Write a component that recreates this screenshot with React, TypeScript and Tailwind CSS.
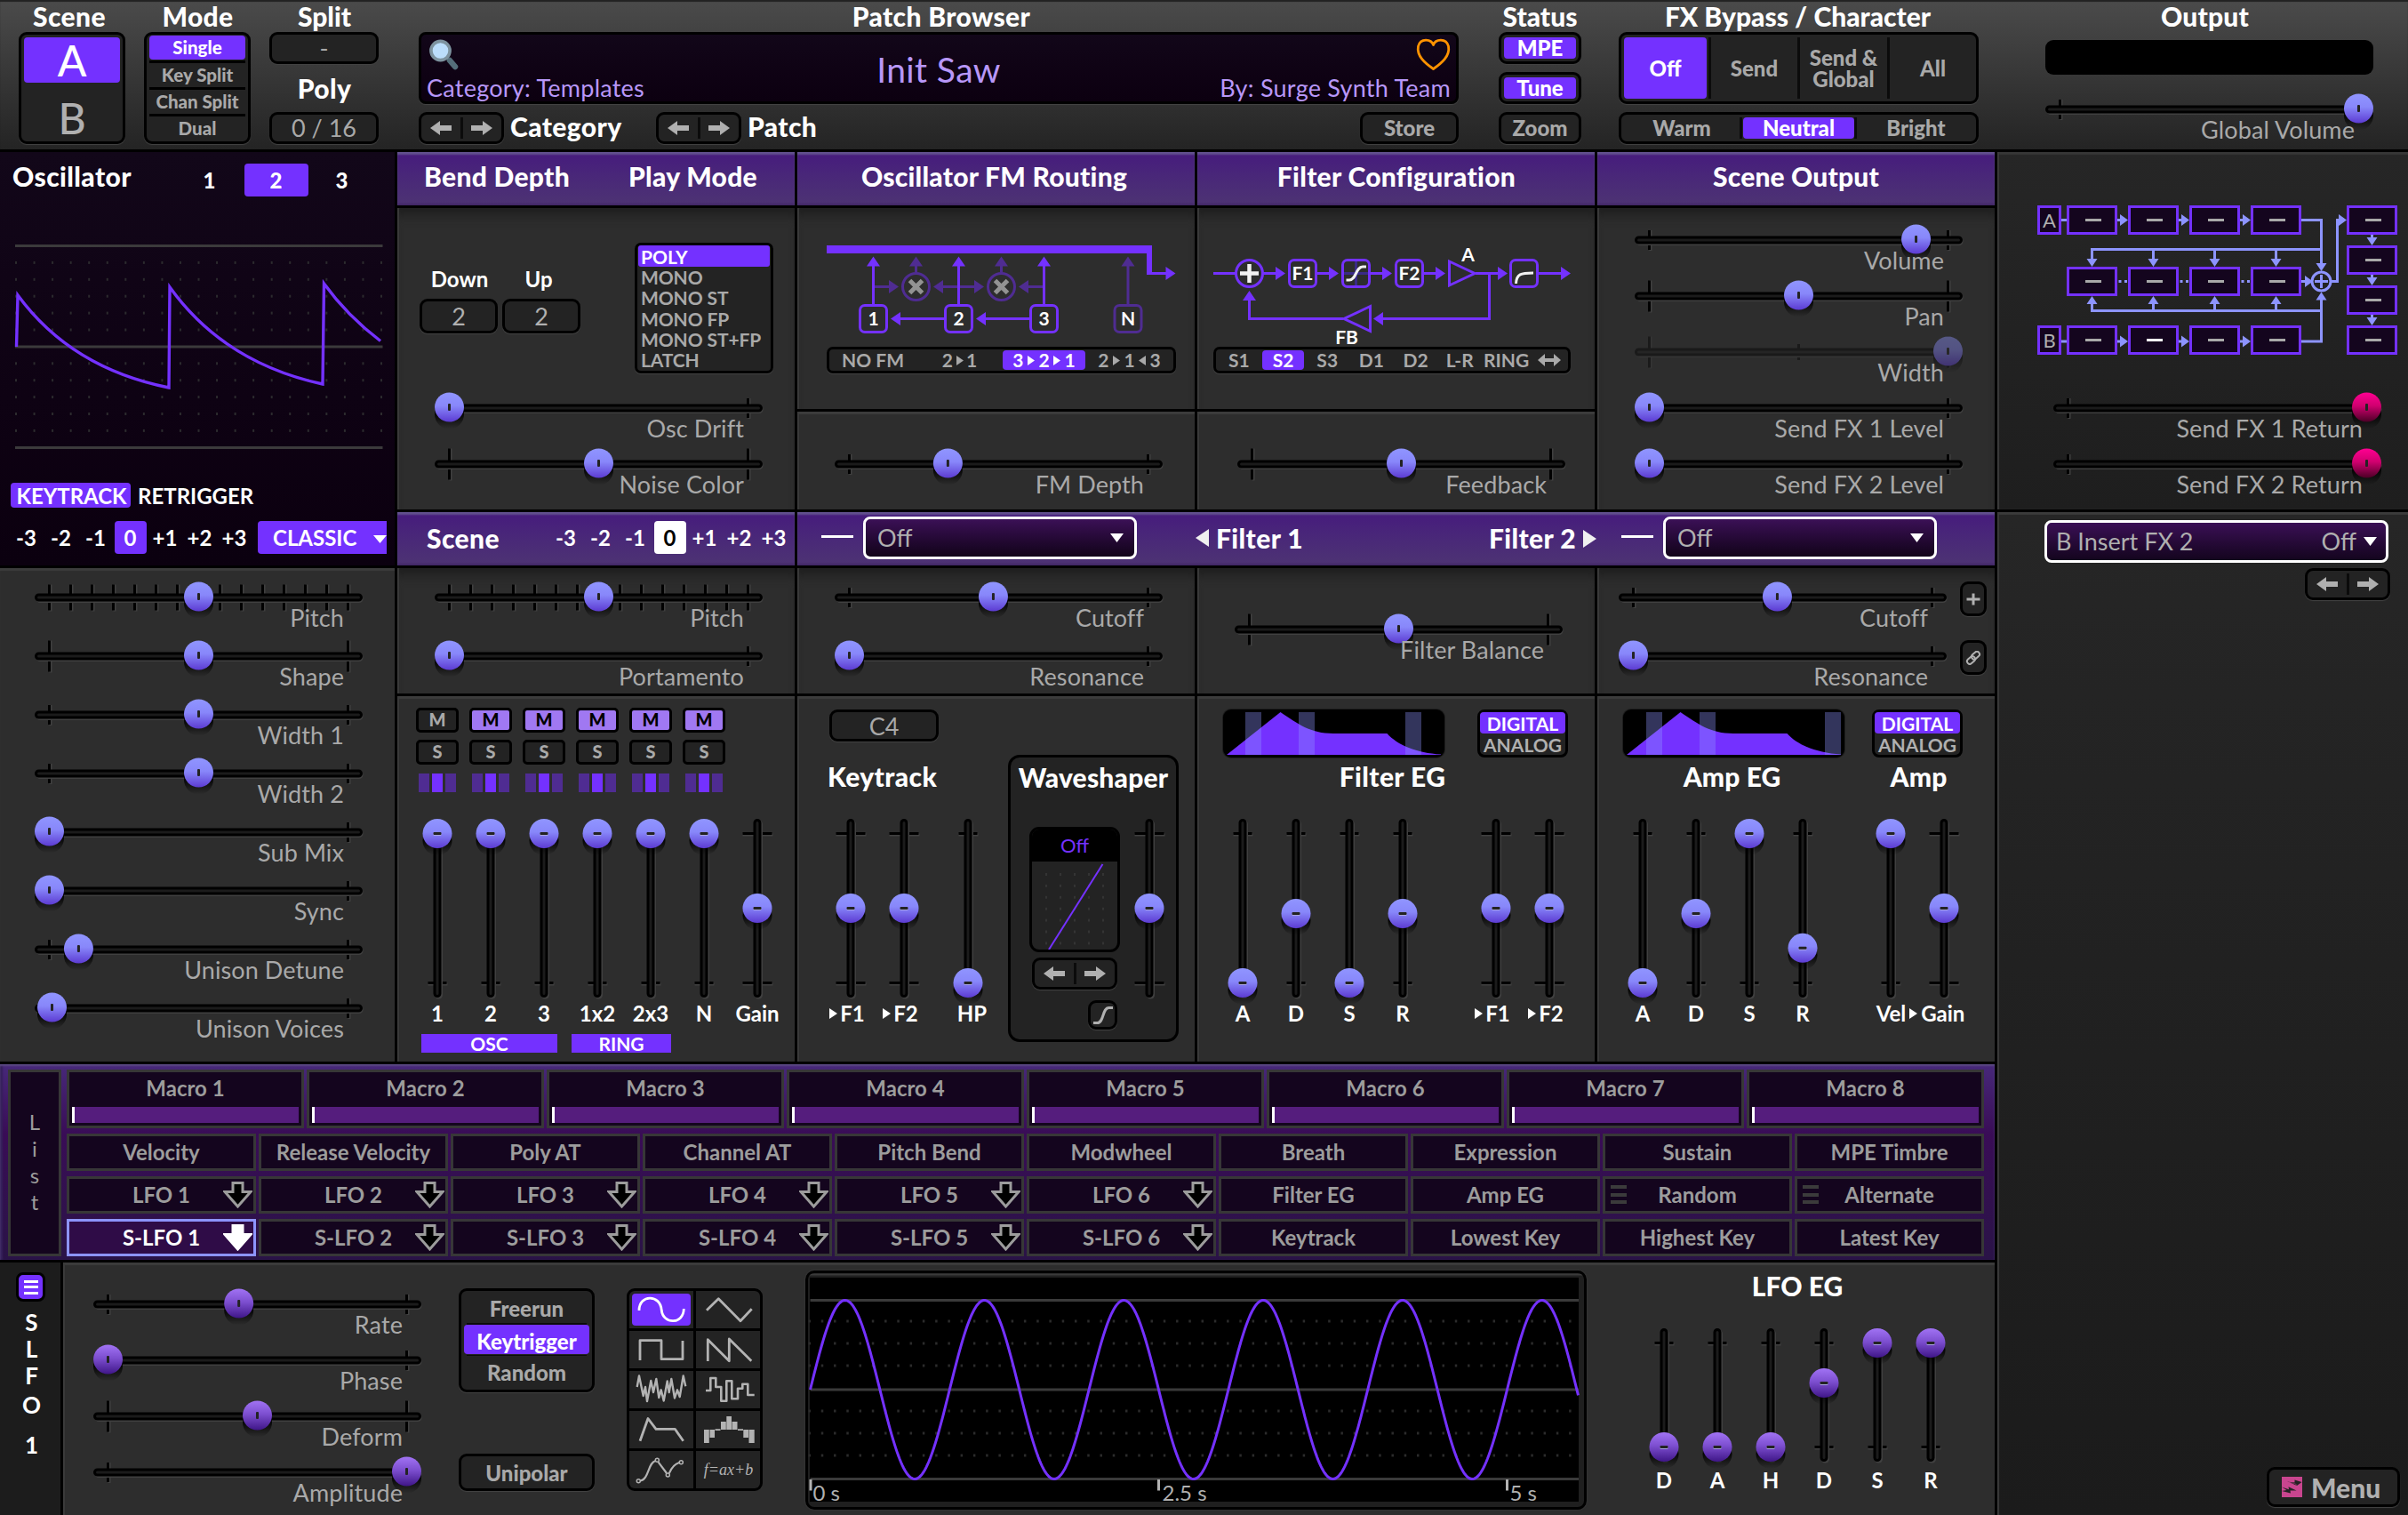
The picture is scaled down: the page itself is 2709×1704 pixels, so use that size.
import React from 'react';

/* ---------- shared drawing helpers ---------- */

type Tone = 'blue' | 'violet' | 'pink';
const KNOB: Record<Tone, string> = { blue: 'url(#kBlue)', violet: 'url(#kViolet)', pink: 'url(#kPink)' };

function Defs() {
  const stops = (id: string, a: string, b: string, c: string) => (
    <linearGradient id={id} x1="0" y1="0" x2="0" y2="1">
      <stop offset="0" stopColor={a} />
      <stop offset="0.45" stopColor={b} />
      <stop offset="1" stopColor={c} />
    </linearGradient>
  );
  return (
    <svg className="absolute h-0 w-0">
      <defs>
        {stops('kBlue', '#9095ff', '#8887fa', '#5c3bd2')}
        {stops('kViolet', '#a173f4', '#7d4fd0', '#3f1688')}
        {stops('kPink', '#ff0092', '#d0006f', '#4c0026')}
        <linearGradient id="kShadow" x1="0" y1="0" x2="0" y2="1">
          <stop offset="0.45" stopColor="#000" stopOpacity="0.95" />
          <stop offset="1" stopColor="#000" stopOpacity="0" />
        </linearGradient>
      </defs>
    </svg>
  );
}

function Knob({ cx, cy, tone, vertical }: { cx: number; cy: number; tone: Tone; vertical?: boolean }) {
  return (
    <g>
      <circle cx={cx} cy={cy + 8} r={16.5} fill="url(#kShadow)" />
      <circle cx={cx} cy={cy} r={16.5} fill={KNOB[tone]} />
      {vertical ? (
        <>
          <rect x={cx - 4.5} y={cy - 0.5} width={9} height={3} rx={1} fill="#a9a5e0" />
          <rect x={cx - 4.5} y={cy - 1.5} width={9} height={3} rx={1} fill="#232323" />
        </>
      ) : (
        <rect x={cx - 1.5} y={cy - 4} width={3} height={8} rx={1} fill="#232323" />
      )}
    </g>
  );
}

interface HProps {
  label: string;
  v: number;
  ticks?: 'short' | 'long' | 'steps' | 'width';
  tone?: Tone;
  dim?: boolean;
}

function HSlider({ label, v, ticks = 'short', tone = 'blue', dim }: HProps) {
  const xs = ticks === 'steps' ? Array.from({ length: 15 }, (_, i) => 16.5 + i * 24) : [16.5, 352.5];
  const h = ticks === 'short' ? 22 : ticks === 'steps' ? 29 : 35;
  return (
    <div className="flex w-[369px] flex-col">
      <svg width="369" height="37" viewBox="0 0 369 37" className="overflow-visible" opacity={dim ? 0.42 : 1}>
        {xs.map((x) => (
          <g key={x}>
            <rect x={x} y={19 - h / 2} width={3} height={h + 1} fill="#404040" />
            <rect x={x - 1.5} y={19 - h / 2} width={3} height={h} fill="#000" />
          </g>
        ))}
        {ticks === 'width' && <rect x={183} y={10} width={3} height={18} fill="#000" />}
        <rect x={1.5} y={16} width={368} height={9} rx={4.5} fill="#404040" />
        <rect x={1.5} y={16} width={366} height={6} rx={3} fill="#1b1b1b" stroke="#000" strokeWidth={3} />
        <Knob cx={16.5 + v * 336} cy={18} tone={tone} />
      </svg>
      <div className="relative -mt-[9px] -mb-px mr-[21px] text-right text-[27px] leading-[27px] tracking-[0.1px] text-[#a9a9a9]">{label}</div>
    </div>
  );
}

function VSlider({ v, long, tone = 'blue', len = 201 }: { v: number; long?: boolean; tone?: Tone; len?: number }) {
  const w = long ? 33 : 21;
  return (
    <svg width="60" height={len} viewBox={`0 0 60 ${len}`} className="overflow-visible">
      {[16.5, len - 16.5].map((y) => (
        <g key={y}>
          <rect x={30 - w / 2} y={y} width={w + 1} height={3} fill="#404040" />
          <rect x={30 - w / 2} y={y - 1.5} width={w} height={3} fill="#000" />
        </g>
      ))}
      <rect x={27} y={1.5} width={9} height={len} rx={4.5} fill="#404040" />
      <rect x={27} y={1.5} width={6} height={len - 3} rx={3} fill="#1b1b1b" stroke="#000" strokeWidth={3} />
      <Knob cx={30} cy={len - 16.5 - v * (len - 33)} tone={tone} vertical />
    </svg>
  );
}

function Channel({ label, v, long, tone, len, cls = '' }: { label: React.ReactNode; v: number; long?: boolean; tone?: Tone; len?: number; cls?: string }) {
  return (
    <div className={`flex w-[60px] flex-col items-center ${cls}`}>
      <VSlider v={v} long={long} tone={tone} len={len} />
      <div className={`flex h-[30px] items-center justify-center text-[24px] leading-[30px] font-bold whitespace-nowrap text-white ${len ? 'mt-[6px]' : 'mt-[3px] -mb-px'}`}>{label}</div>
    </div>
  );
}

const Tri = ({ w = 9, h = 11, left, cls = '' }: { w?: number; h?: number; left?: boolean; cls?: string }) => (
  <svg width={w} height={h} viewBox="0 0 10 10" preserveAspectRatio="none" className={cls} fill="currentColor">
    <path d={left ? 'M10 0V10L0 5Z' : 'M0 0V10L10 5Z'} />
  </svg>
);

const Down = ({ w = 15, h = 9 }: { w?: number; h?: number }) => (
  <svg width={w} height={h} viewBox="0 0 10 10" preserveAspectRatio="none" fill="#fff">
    <path d="M0 0H10L5 10Z" />
  </svg>
);

const Title = ({ children, cls = '' }: { children: React.ReactNode; cls?: string }) => (
  <div className={`text-[30px] font-black whitespace-nowrap text-white ${cls}`}>{children}</div>
);

const box = 'box-border rounded-[9px] border-[3px] border-black bg-[#232323] shadow-[0_1px_1px_#444]';
const band = 'bg-linear-to-b from-[#461a7d] to-[#4d3373] shadow-[inset_0_3px_2px_#62518e,inset_0_-2px_2px_#432868]';
const bodyTop = 'shadow-[inset_2px_0_1px_#3b3b3b,inset_0_14px_12px_-6px_#1f1f1f] bg-[#2d2d2d]';
const bodyLit = 'shadow-[inset_2px_0_1px_#3b3b3b,inset_0_3px_1px_#3c3c3c] bg-[#2d2d2d]';

function ArrowBox({ cls = '' }: { cls?: string }) {
  return (
    <div className={`${box} flex h-[36px] w-[96px] items-center text-[#b0b0b0] ${cls}`}>
      <svg className="mx-auto" width="24" height="16" viewBox="0 0 24 16" fill="currentColor"><path d="M0 8L11 0V5H24V11H11V16Z" /></svg>
      <div className="h-[24px] w-[3px] bg-[#0b0b0b]" />
      <svg className="mx-auto" width="24" height="16" viewBox="0 0 24 16" fill="currentColor"><path d="M24 8L13 0V5H0V11H13V16Z" /></svg>
    </div>
  );
}

/* ---------- header ---------- */

function Header() {
  return (
    <header className="flex h-[168px] items-start bg-linear-to-b from-[#4b4b4b] to-[#242424] shadow-[inset_0_2px_1px_#222]">
      <div className="ml-[21px] flex w-[120px] flex-col">
        <Title cls="h-[36px] pr-[6px] text-center leading-[36px] tracking-[0.4px]">Scene</Title>
        <div className={`${box} flex h-[126px] flex-col p-[3px] text-[48px] font-medium`}>
          <div className="flex h-[51px] items-center justify-center rounded-[4px] bg-[#7431ff] pt-px text-white">A</div>
          <div className="mt-[4px] h-[3px] bg-black" />
          <div className="flex flex-1 items-center justify-center pb-[4px] text-[#b0b0b0]">B</div>
        </div>
      </div>
      <div className="ml-[21px] flex w-[120px] flex-col">
        <Title cls="h-[36px] pl-px text-center leading-[36px] tracking-[0.3px]">Mode</Title>
        <div className={`${box} flex h-[126px] flex-col px-[3px] text-center text-[20.5px] leading-[26px] font-black text-[#a9a9a9]`}>
          <div className="mt-[1px] h-[27px] rounded-[4px] bg-[#7431ff] leading-[27px] text-white">Single</div>
          <div className="mt-px h-[3px] bg-black" />
          <div className="h-[27px]">Key Split</div>
          <div className="h-[3px] bg-black" />
          <div className="h-[27px]">Chan Split</div>
          <div className="h-[3px] bg-black" />
          <div className="h-[27px]">Dual</div>
        </div>
      </div>
      <div className="ml-[21px] flex w-[123px] flex-col">
        <Title cls="h-[36px] pl-px text-center leading-[36px]">Split</Title>
        <div className={`${box} flex h-[36px] items-center justify-center text-[27px] text-[#a9a9a9]`}>-</div>
        <Title cls="h-[54px] pl-px text-center leading-[54px] tracking-[0.4px]">Poly</Title>
        <div className={`${box} flex h-[36px] items-center justify-center text-[27px] text-[#a9a9a9]`}>0 / 16</div>
      </div>
      <div className="ml-[45px] flex w-[1170px] flex-col">
        <Title cls="h-[36px] pl-[6px] text-center leading-[36px] tracking-[0.35px]">Patch Browser</Title>
        <div className="grid h-[81px] grid-cols-[1fr_auto_1fr] rounded-[8px] border-[3px] border-black bg-linear-to-b from-[#120719] to-[#0c0010] text-[27px] leading-[27px] tracking-[0.25px] text-[#b897f8] shadow-[0_1px_1px_#444]">
          <div className="flex flex-col justify-between pt-[4px] pb-[2px] pl-[6px]">
            <svg width="36" height="36" viewBox="0 0 36 36" className="ml-px">
              <path d="M22 22L25.5 25.5" stroke="#90a4ae" strokeWidth="3.5" />
              <path d="M25 25L31 32" stroke="#546e7a" strokeWidth="6.5" strokeLinecap="round" />
              <circle cx="14.5" cy="14" r="10.6" fill="#bbdefb" stroke="#7d939f" strokeWidth="3.6" />
            </svg>
            <div>Category: Templates</div>
          </div>
          <div className="flex items-center pt-[3px] text-[39px] tracking-[0.4px]">Init Saw</div>
          <div className="flex flex-col items-end justify-between pt-[3px] pr-[6px] pb-[2px]">
            <svg width="42" height="38" viewBox="0 0 42 38" className="-mr-px" fill="none" stroke="#ff9300" strokeWidth="2.8" strokeLinejoin="round">
              <path d="M21.5 8.5C19 1.5 7 0.5 4.5 10C2.5 21 12 29 21.5 35.5C31 29 40.500 21 38.500 10C36 0.5 24 1.500 21.500 8.500Z" />
            </svg>
            <div>By: Surge Synth Team</div>
          </div>
        </div>
        <div className="mt-[9px] flex h-[36px] items-center">
          <ArrowBox />
          <Title cls="ml-[7px] w-[164px] pb-[4px] leading-[32px] tracking-[0.4px]">Category</Title>
          <ArrowBox />
          <Title cls="ml-[7px] pb-[4px] leading-[32px] tracking-[0.4px]">Patch</Title>
          <div className={`${box} ml-auto flex h-[36px] w-[111px] items-center justify-center text-[24px] font-black text-[#a9a9a9]`}>Store</div>
        </div>
      </div>
      <div className="ml-[45px] flex w-[93px] flex-col gap-[9px] text-center text-[24px] leading-[24px] font-black">
        <Title cls="-mb-[9px] h-[36px] self-center leading-[36px]">Status</Title>
        <div className={`${box} h-[36px] p-[3px] text-white`}><div className="h-[24px] rounded-[4px] bg-[#7431ff]">MPE</div></div>
        <div className={`${box} h-[36px] p-[3px] text-white`}><div className="h-[24px] rounded-[4px] bg-[#7431ff]">Tune</div></div>
        <div className={`${box} h-[36px] pt-[3px] text-[#a9a9a9]`}>Zoom</div>
      </div>
      <div className="ml-[42px] flex w-[405px] flex-col text-center text-[24px] leading-[24px] font-black text-[#a9a9a9]">
        <Title cls="h-[36px] self-center pr-[2px] leading-[36px]">FX Bypass / Character</Title>
        <div className={`${box} flex h-[81px] items-center p-[3px]`}>
          <div className="flex h-[69px] w-[93px] items-center justify-center rounded-[4px] bg-[#7431ff] text-white">Off</div>
          <div className="ml-[2px] h-[69px] w-[3px] bg-[#0b0b0b]" />
          <div className="w-[97px]">Send</div>
          <div className="h-[69px] w-[3px] bg-[#0b0b0b]" />
          <div className="w-[98px]">Send &amp;<br />Global</div>
          <div className="h-[69px] w-[3px] bg-[#0b0b0b]" />
          <div className="flex-1 pl-[3px]">All</div>
        </div>
        <div className={`${box} mt-[9px] flex h-[36px] items-center p-[3px]`}>
          <div className="w-[130px]">Warm</div>
          <div className="h-[24px] w-[3px] bg-[#0b0b0b]" />
          <div className="ml-px h-[24px] w-[125px] rounded-[4px] bg-[#7431ff] text-white">Neutral</div>
          <div className="h-[24px] w-[3px] bg-[#0b0b0b]" />
          <div className="flex-1 pl-[2px]">Bright</div>
        </div>
      </div>
      <div className="ml-[75px] flex w-[369px] flex-col">
        <Title cls="h-[36px] pr-[10px] text-center leading-[36px] tracking-[0.2px]">Output</Title>
        <div className="mt-[9px] h-[39px] rounded-[9px] bg-black" />
        <div className="mt-[20px]"><HSlider label="Global Volume" v={1} /></div>
      </div>
    </header>
  );
}

/* ---------- oscillator column ---------- */

const octs = ['-3', '-2', '-1', '0', '+1', '+2', '+3'];

function Octaves({ active }: { active: string }) {
  return (
    <div className="flex text-center text-[24px] leading-[37px] font-bold text-white">
      {octs.map((o) => (
        <div key={o} className="w-[39px] px-[1.5px]">
          <div className={`h-[37px] rounded-[4px] ${o === '0' ? active : ''}`}>{o}</div>
        </div>
      ))}
    </div>
  );
}

function OscColumn() {
  const xs = Array.from({ length: 21 }, (_, i) => 18 + i * 20.55);
  const ys = [1, 2, 3, 4, 5, 7, 8, 9, 10, 11].map((i) => 276.5 + i * 18.9);
  return (
    <section className="flex w-[444px] flex-col">
      <div className="flex h-[465px] flex-col bg-linear-to-b from-[#120719] to-[#0b000f]">
        <div className="flex h-[59px] items-start">
          <Title cls="mt-[9px] ml-[14px] w-[184px] leading-[36px] tracking-[0.4px]">Oscillator</Title>
          <div className="mt-[13px] flex text-center text-[24px] leading-[37px] font-black text-white">
            <div className="w-[75px]">1</div>
            <div className="w-[75px] px-[1.5px]"><div className="rounded-[4px] bg-[#7431ff]">2</div></div>
            <div className="w-[73px]">3</div>
          </div>
        </div>
        <svg width="444" height="300" viewBox="0 230 444 300" fill="none">
          {[276.500, 390, 503.500].map((y) => <path key={y} d={`M17 ${y}H430.500`} stroke="#3b3a3b" strokeWidth="3" />)}
          {ys.map((y) => xs.map((x) => <rect key={x + '-' + y} x={x - 1} y={y - 1.500} width="2" height="3" fill="#2c2b2e" />))}
          <path d="M18.500 390L20 332Q80 414 190 436L191 323Q252 408 363 432L364.500 319Q390.500 355 428 383.500" stroke="#7431ff" strokeWidth="3.4" />
        </svg>
        <div className="mt-[13px] ml-[12px] flex items-center text-[24px] leading-[27px] font-bold text-white">
          <div className="w-[135px] rounded-[4px] bg-[#7431ff] pt-px pl-[2px] text-center leading-[27px]">KEYTRACK</div>
          <div className="ml-[8px] pt-px">RETRIGGER</div>
        </div>
        <div className="mt-[15px] flex items-center pl-[10px]">
          <Octaves active="bg-[#7431ff]" />
          <div className="ml-[7px] flex h-[37px] w-[145px] items-center overflow-hidden rounded-l-[4px] bg-[#7431ff] pl-[17px] text-[24px] font-bold text-white">
            <span className="w-[113px] shrink-0">CLASSIC</span>
            <span className="shrink-0 pt-[3px]"><Down w={15} h={9} /></span>
          </div>
        </div>
      </div>
      <div className="mt-[3px] flex flex-1 flex-col gap-[12px] bg-[#2d2d2d] pt-[14px] pl-[39px] shadow-[inset_0_3px_1px_#3c3c3c]">
        <HSlider label="Pitch" v={0.5} ticks="steps" />
        <HSlider label="Shape" v={0.5} ticks="long" />
        <HSlider label="Width 1" v={0.5} />
        <HSlider label="Width 2" v={0.5} />
        <HSlider label="Sub Mix" v={0} />
        <HSlider label="Sync" v={0} />
        <HSlider label="Unison Detune" v={0.098} />
        <HSlider label="Unison Voices" v={0.009} />
      </div>
    </section>
  );
}

/* ---------- upper row panels ---------- */

function BendPanel() {
  return (
    <section className="flex w-[447px] flex-col">
      <div className={`${band} flex h-[60px]`}>
        <Title cls="ml-[30px] w-[230px] leading-[55px] tracking-[0.3px]">Bend Depth</Title>
        <Title cls="leading-[55px] tracking-[0.3px]">Play Mode</Title>
      </div>
      <div className={`${bodyTop} mt-[3px] flex flex-1 flex-col`}>
        <div className="flex h-[206px] items-start">
          <div className="mt-[64px] ml-[25px] grid grid-cols-[88px_88px] gap-x-[5px] text-center">
            <div className="pl-[2px] text-[24px] leading-[31px] font-bold text-white">Down</div>
            <div className="pr-[6px] text-[24px] leading-[31px] font-bold text-white">Up</div>
            <div className={`${box} mt-[7px] h-[39px] text-[27px] leading-[34px] text-[#b0b0b0]`}>2</div>
            <div className={`${box} mt-[7px] h-[39px] text-[27px] leading-[34px] text-[#b0b0b0]`}>2</div>
          </div>
          <div className={`${box} mt-[39px] ml-[61px] flex h-[147px] w-[156px] flex-col rounded-[7px]! px-px text-[21px] leading-[23.300px] font-bold text-[#a9a9a9]`}>
            <div className="h-[24px] rounded-[3px] bg-[#7431ff] pl-[3px] leading-[26px] text-white">POLY</div>
            {['MONO', 'MONO ST', 'MONO FP', 'MONO ST+FP', 'LATCH'].map((t) => <div key={t} className="pl-[3px] tracking-[-0.1px]">{t}</div>)}
          </div>
        </div>
        <div className="flex flex-col gap-[9px] pl-[42px]">
          <HSlider label="Osc Drift" v={0} />
          <HSlider label="Noise Color" v={0.5} ticks="long" />
        </div>
      </div>
    </section>
  );
}

const P = '#7431ff';
const D = '#4f2c92';
const up = (x: number, y: number) => `M${x - 7.5} ${y + 11}L${x} ${y}L${x + 7.5} ${y + 11}Z`;
const rt = (x: number, y: number) => `M${x - 11} ${y - 7.5}L${x} ${y}L${x - 11} ${y + 7.5}Z`;
const lf = (x: number, y: number) => `M${x + 11} ${y - 7.5}L${x} ${y}L${x + 11} ${y + 7.5}Z`;

function Node({ x, y, c = P, t }: { x: number; y: number; c?: string; t?: string }) {
  return (
    <g>
      <rect x={x - 15} y={y - 15} width={30} height={30} rx={5.5} fill="none" stroke={c} strokeWidth={3} />
      {t && <text x={x} y={y + 7.500} textAnchor="middle" fontSize={21} fontWeight={700} fill="#fff">{t}</text>}
    </g>
  );
}

function FMPanel() {
  const item = 'flex h-[22px] items-center justify-center';
  return (
    <section className="flex w-[447px] flex-col">
      <div className={`${band} h-[60px]`}><Title cls="pr-[4px] text-center leading-[55px] tracking-[0.25px]">Oscillator FM Routing</Title></div>
      <div className={`${bodyTop} mt-[3px] flex h-[226px] flex-col pt-[33px]`}>
        <svg className="ml-[30px]" width="399" height="112" viewBox="927 267 399 112" fill="none">
          <path d="M930 280.500H1296" stroke={P} strokeWidth="9" />
          <path d="M1293 280V309" stroke={P} strokeWidth="6" />
          <path d="M1292 307.500H1313" stroke={P} strokeWidth="3" />
          <path d={rt(1322.500, 307.500)} fill={P} />
          <g stroke={D} strokeWidth="3">
            <path d="M982.500 322.500H1002M1078.500 322.500H1060M1078.500 322.500H1098M1174.500 322.500H1156M1030.500 298V307M1126.500 298V307M1269 298V343" />
            <circle cx="1030.500" cy="322.500" r="15" /><circle cx="1126.500" cy="322.500" r="15" />
          </g>
          <path d={rt(1011, 322.500) + lf(1050, 322.500) + rt(1107, 322.500) + lf(1146, 322.500) + up(1030.500, 288.500) + up(1126.500, 288.500) + up(1269, 288.500)} fill={D} />
          <g stroke={P} strokeWidth="3">
            <path d="M982.500 298V343M1078.500 298V343M1174.500 298V343M1063 358.500H1012M1159 358.500H1108" />
          </g>
          <path d={up(982.500, 288.500) + up(1078.500, 288.500) + up(1174.500, 288.500) + lf(1002, 358.500) + lf(1098, 358.500)} fill={P} />
          <path d="M1023.500 315.500L1037.500 329.500M1037.500 315.500L1023.500 329.500M1119.500 315.500L1133.500 329.500M1133.500 315.500L1119.500 329.500" stroke="#939393" strokeWidth="5" />
          <Node x={982.5} y={358.5} t="1" /><Node x={1078.5} y={358.5} t="2" /><Node x={1174.500} y={358.5} t="3" /><Node x={1269} y={358.5} c={D} t="N" />
        </svg>
        <div className={`${box} mt-[11px] ml-[33px] flex h-[30px] w-[393px] items-center rounded-[7px]! text-[21px] leading-[22px] font-bold text-[#a9a9a9]`}>
          <div className={`${item} w-[98px]`}>NO FM</div>
          <div className={`${item} w-[97px] gap-[3.500px]`}>2<Tri w={8} />1</div>
          <div className={`${item} w-[93px] gap-[4.500px] rounded-[4px] bg-[#7431ff] text-white`}>3<Tri w={8} />2<Tri w={8} />1</div>
          <div className={`${item} flex-1 gap-[4.500px]`}>2<Tri w={8} />1<Tri w={8} left />3</div>
        </div>
      </div>
      <div className={`${bodyLit} mt-[3px] flex-1 pt-[40px] pl-[42px]`}><HSlider label="FM Depth" v={0.33} /></div>
    </section>
  );
}

function FilterConfigPanel() {
  return (
    <section className="flex w-[447px] flex-col">
      <div className={`${band} h-[60px]`}><Title cls="pl-px text-center leading-[55px] tracking-[0.3px]">Filter Configuration</Title></div>
      <div className={`${bodyTop} mt-[3px] flex h-[226px] flex-col pt-[33px]`}>
        <svg className="ml-[15px]" width="408" height="123" viewBox="1362 267 408 123" fill="none">
          <g stroke={P} strokeWidth="3">
            <path d="M1365 307.500H1390M1420 307.500H1436M1482 307.500H1496M1542 307.500H1556M1602 307.500H1617M1660 307.500H1686M1731 307.500H1757" />
            <path d="M1675.500 307.500V358.500H1555M1511 358.500H1405.500V337" />
            <circle cx="1405.500" cy="307.500" r="15" />
            <path d="M1630.500 294V321L1659 307.500Z" />
            <path d="M1541.500 344.500V372.500L1512 358.500Z" />
          </g>
          <path d={rt(1446, 307.500) + rt(1506, 307.500) + rt(1566, 307.500) + rt(1626, 307.500) + rt(1696, 307.500) + rt(1767, 307.500) + lf(1545, 358.500) + up(1405.500, 327)} fill={P} />
          <path d="M1525.500 293V322M1511 307.500H1540" stroke="#3a2a86" strokeWidth="3" />
          <path d="M1405.500 297V318M1395 307.500H1416" stroke="#f2f2f2" strokeWidth="4.500" />
          <path d="M1514.500 315H1518C1526 315 1525 300 1533 300H1537" stroke="#f2f2f2" strokeWidth="3" />
          <path d="M1705.500 319C1706 308 1711 307 1725 307" stroke="#f2f2f2" strokeWidth="3" />
          <Node x={1465.500} y={307.5} t="F1" /><Node x={1525.500} y={307.5} /><Node x={1585.500} y={307.5} t="F2" /><Node x={1714.500} y={307.5} />
          <text x="1651.500" y="293.500" textAnchor="middle" fontSize="21" fontWeight="700" fill="#fff">A</text>
          <text x="1515" y="386.500" textAnchor="middle" fontSize="21" fontWeight="700" fill="#fff">FB</text>
        </svg>
        <div className={`${box} ml-[18px] flex h-[30px] w-[402px] items-center rounded-[7px]! text-center text-[21px] leading-[22px] font-bold text-[#a9a9a9]`}>
          {['S1', 'S2', 'S3', 'D1', 'D2', 'L-R'].map((t) => (
            <div key={t} className={`w-[49.700px] ${t === 'S2' ? 'text-white' : ''}`}><div className={`mr-0 ml-[2px] rounded-[4px] ${t === 'S2' ? 'bg-[#7431ff]' : ''}`}>{t}</div></div>
          ))}
          <div className="ml-[2px] w-[53px]">RING</div>
          <svg className="mx-auto" width="26" height="16" viewBox="0 0 26 16" fill="currentColor"><path d="M0 8L8 1V6H18V1L26 8L18 15V10H8V15Z" /></svg>
        </div>
      </div>
      <div className={`${bodyLit} mt-[3px] flex-1 pt-[40px] pl-[45px]`}><HSlider label="Feedback" v={0.5} ticks="long" /></div>
    </section>
  );
}

function SceneOutputPanel() {
  return (
    <section className="flex w-[447px] flex-col">
      <div className={`${band} h-[60px]`}><Title cls="text-center leading-[55px] tracking-[0.15px]">Scene Output</Title></div>
      <div className={`${bodyTop} mt-[3px] flex flex-1 flex-col gap-[9px] pt-[17px] pl-[42px]`}>
        <HSlider label="Volume" v={0.893} />
        <HSlider label="Pan" v={0.5} ticks="long" />
        <HSlider label="Width" v={1} ticks="width" dim />
        <HSlider label="Send FX 1 Level" v={0} />
        <HSlider label="Send FX 2 Level" v={0} />
      </div>
    </section>
  );
}

/* ---------- lower row panels ---------- */

const chans = ['1', '2', '3', '1x2', '2x3', 'N'];

function ScenePanel() {
  return (
    <section className="flex w-[447px] flex-col">
      <div className={`${band} flex h-[60px] items-center`}>
        <Title cls="ml-[33px] w-[137px] pb-[2px] leading-[56px] tracking-[0.4px]">Scene</Title>
        <div className="-mt-[3px]"><Octaves active="bg-white text-black" /></div>
      </div>
      <div className={`${bodyTop} mt-[3px] flex h-[141px] flex-col gap-[12px] pt-[14px] pl-[42px]`}>
        <HSlider label="Pitch" v={0.5} ticks="steps" />
        <HSlider label="Portamento" v={0} />
      </div>
      <div className={`${bodyLit} mt-[3px] flex flex-1 flex-col pt-[13px] pl-[15px]`}>
        <div className="flex items-end">
          {chans.map((c, i) => (
            <div key={c} className="flex w-[60px] flex-col items-center">
              <div className={`h-[28px] w-[48px] rounded-[5px] border-[3px] border-black text-center text-[20px] leading-[21px] font-black ${i ? 'bg-[#a078f2] text-black' : 'bg-[#232323] text-[#a9a9a9]'}`}>M</div>
              <div className="mt-[8px] h-[28px] w-[48px] rounded-[5px] border-[3px] border-black bg-[#232323] text-center text-[20px] leading-[21px] font-black text-[#a9a9a9]">S</div>
              <div className="mt-[10px] mb-[30px] flex h-[21px] gap-[3px]">
                <div className="w-[12px] bg-[#4f2c92]" /><div className="w-[12px] bg-[#7431ff]" /><div className="w-[12px] bg-[#4f2c92]" />
              </div>
              <Channel label={c} v={1} />
            </div>
          ))}
          <Channel label="Gain" v={0.5} long />
        </div>
        <div className="mt-[9px] flex pl-[12px] text-center text-[21px] leading-[21px] font-bold text-white">
          <div className="w-[153px] bg-[#7431ff]">OSC</div>
          <div className="ml-[16px] w-[112px] bg-[#7431ff]">RING</div>
        </div>
      </div>
    </section>
  );
}

function OffSelect() {
  return (
    <div className="flex items-start pt-[5px]">
      <div className="mt-[21px] h-[3px] w-[36px] bg-white" />
      <div className="ml-[11px] flex h-[48px] w-[308px] items-center justify-between rounded-[8px] border-[3px] border-white bg-linear-to-b from-[#3b1056] to-[#12041a] pr-[12px] pl-[13px] text-[27px] text-[#b0b0b0]">
        <span className="pt-px">Off</span><Down w={15} h={10} />
      </div>
    </div>
  );
}

const trig = (t: string) => <span className="-ml-[8px] flex items-center gap-[3px]"><Tri w={9} h={12} />{t}</span>;

function Digital({ cls = '' }: { cls?: string }) {
  return (
    <div className={`h-[54px] w-[102px] rounded-[8px] border-[3px] border-black bg-[#232323] text-center text-[21px] leading-[25px] font-bold ${cls}`}>
      <div className="h-[24px] rounded-[4px] bg-[#7431ff] leading-[26px] text-white">DIGITAL</div>
      <div className="text-[#b0b0b0]">ANALOG</div>
    </div>
  );
}

function EnvView({ handles, cls = '' }: { handles: number[]; cls?: string }) {
  return (
    <div className={`h-[54px] w-[249px] rounded-[9px] bg-black shadow-[0_0_0_1px_#1d1d1d] ${cls}`}>
      <svg width="249" height="54" viewBox="0 0 249 54">
        <path d="M4 51L64.500 3C84 16 98 27 124 27H184.500C196 40 218 49 245 50.500V51Z" fill="#7431ff" />
        {handles.map((x) => <rect key={x} x={x} y={3} width={18} height={48} fill="#8d94ff" fillOpacity={0.36} />)}
      </svg>
    </div>
  );
}

function FilterArea() {
  return (
    <section className="flex w-[1347px] flex-col">
      <div className={`${band} grid h-[60px] grid-cols-[447px_1fr_447px] gap-[3px]`}>
        <div className="pl-[27px]"><OffSelect /></div>
        <div className="flex items-start justify-between text-[#f0f0f0]">
          <div className="-ml-[2px] flex items-center gap-[8px]"><Tri w={15} h={20} left /><Title cls="leading-[58px] tracking-[0.4px]">Filter 1</Title></div>
          <div className="-mr-[2px] flex items-center gap-[8px]"><Title cls="leading-[58px] tracking-[0.4px]">Filter 2</Title><Tri w={15} h={20} cls="mt-[2px]" /></div>
        </div>
        <div className="pl-[27px]"><OffSelect /></div>
      </div>
      <div className="mt-[3px] flex h-[141px] gap-[3px]">
        <div className={`${bodyTop} flex w-[447px] flex-col gap-[12px] pt-[14px] pl-[42px]`}>
          <HSlider label="Cutoff" v={0.482} />
          <HSlider label="Resonance" v={0} />
        </div>
        <div className={`${bodyTop} w-[447px] pt-[50px] pl-[42px]`}>
          <HSlider label="Filter Balance" v={0.5} ticks="long" />
        </div>
        <div className={`${bodyTop} flex w-[447px] pt-[14px] pl-[24px]`}>
          <div className="flex flex-col gap-[12px]">
            <HSlider label="Cutoff" v={0.482} />
            <HSlider label="Resonance" v={0} />
          </div>
          <div className="mt-px ml-[15px] flex flex-col gap-[27px]">
            <div className={`${box} flex h-[39px] w-[30px] items-center justify-center`}>
              <svg width="16" height="16" viewBox="0 0 16 16"><path d="M8 1.500V14.500M0.500 8H15.500" stroke="#b0b0b0" strokeWidth="3" /></svg>
            </div>
            <div className={`${box} flex h-[39px] w-[30px] items-center justify-center`}>
              <svg width="18" height="16" viewBox="0 0 18 16" fill="none" stroke="#b0b0b0" strokeWidth="2">
                <rect x="6.500" y="2.200" width="10" height="6" rx="3" transform="rotate(-42 11.500 5.200)" />
                <rect x="1.500" y="7.500" width="10" height="6" rx="3" transform="rotate(-42 6.500 10.500)" />
              </svg>
            </div>
          </div>
        </div>
      </div>
      <div className="mt-[3px] flex flex-1 gap-[3px]">
        <div className={`${bodyLit} flex w-[447px] items-start`}>
          <div className="flex w-[237px] flex-col pt-[15px] pl-[30px]">
            <div className={`${box} ml-[6px] h-[36px] w-[123px] text-center text-[27px] leading-[32px] text-[#a9a9a9]`}>C4</div>
            <Title cls="mt-[21px] ml-[4px] leading-[36px] tracking-[0.4px]">Keytrack</Title>
            <div className="mt-[30px] flex">
              <Channel label={trig('F1')} v={0.5} long />
              <Channel label={trig('F2')} v={0.5} long />
              <Channel label={<span className="pl-[9px]">HP</span>} v={0} cls="ml-[12px]" />
            </div>
          </div>
          <div className="mt-[66px] flex h-[323px] w-[192px] flex-col rounded-[13px] border-[3px] border-black bg-[#232323] pt-[5px]">
            <Title cls="text-center leading-[35px] tracking-[0.2px]">Waveshaper</Title>
            <div className="mt-px flex pl-[21px]">
              <div className="mt-[37px] flex w-[102px] flex-col items-center">
                <div className="h-[141px] w-[102px] overflow-hidden rounded-[11px] border-[3px] border-black bg-[#232323]">
                  <div className="h-[36px] bg-black text-center text-[22px] leading-[35px] text-[#7431ff]">Off</div>
                  <svg width="96" height="99" viewBox="1161 969 96 99">
                    {[0, 1, 2, 3, 4].map((i) => [0, 1, 2, 3, 4, 5, 6].map((j) => <rect key={`${i}-${j}`} x={1176 + i * 16} y={982 + j * 12.900} width="2" height="3" fill="#343434" />))}
                    <path d="M1180 1068L1240.500 972" stroke="#7431ff" strokeWidth="2" />
                  </svg>
                </div>
                <ArrowBox cls="mt-[6px]" />
                <div className={`${box} mt-[12px] mr-[3px] flex h-[33px] w-[33px] items-center justify-center self-end`}>
                  <svg width="24" height="24" viewBox="-12 -12 24 24"><path d="M-11 8.500H-6.500C1 8.500 -1 -8.500 6.500 -8.500H11" fill="none" stroke="#b0b0b0" strokeWidth="3" /></svg>
                </div>
              </div>
              <div className="mt-[28px] ml-[3px]"><VSlider v={0.5} long /></div>
            </div>
          </div>
        </div>
        <div className={`${bodyLit} flex w-[447px] flex-col pt-[15px]`}>
          <div className="flex pl-[29px]"><EnvView handles={[25, 85, 205]} /><Digital cls="ml-[37px]" /></div>
          <Title cls="mt-[3px] pr-[8px] text-center leading-[36px] tracking-[0.4px]">Filter EG</Title>
          <div className="mt-[30px] flex pl-[21px]">
            <Channel label="A" v={0} /><Channel label="D" v={0.464} /><Channel label="S" v={0} /><Channel label="R" v={0.464} />
            <Channel label={trig('F1')} v={0.5} long cls="ml-[45px]" /><Channel label={trig('F2')} v={0.5} long />
          </div>
        </div>
        <div className={`${bodyLit} flex w-[447px] flex-col pt-[15px]`}>
          <div className="flex pl-[29px]"><EnvView handles={[26, 86, 227]} /><Digital cls="ml-[31px]" /></div>
          <div className="mt-[3px] flex">
            <Title cls="w-[303px] text-center leading-[36px] tracking-[0.1px]">Amp EG</Title>
            <Title cls="w-[117px] text-center leading-[36px] tracking-[0.1px]">Amp</Title>
          </div>
          <div className="mt-[30px] flex pl-[21px]">
            <Channel label="A" v={0} /><Channel label="D" v={0.464} /><Channel label="S" v={1} /><Channel label="R" v={0.233} />
            <Channel label={<span className="ml-[67px] flex items-center gap-[4px]">Vel<Tri w={9} h={12} />Gain</span>} v={1} cls="ml-[39px]" />
            <Channel label="" v={0.5} long />
          </div>
        </div>
      </div>
    </section>
  );
}

/* ---------- modulation grid ---------- */

const modRows = [
  ['Velocity', 'Release Velocity', 'Poly AT', 'Channel AT', 'Pitch Bend', 'Modwheel', 'Breath', 'Expression', 'Sustain', 'MPE Timbre'],
  ['LFO 1', 'LFO 2', 'LFO 3', 'LFO 4', 'LFO 5', 'LFO 6', 'Filter EG', 'Amp EG', 'Random', 'Alternate'],
  ['S-LFO 1', 'S-LFO 2', 'S-LFO 3', 'S-LFO 4', 'S-LFO 5', 'S-LFO 6', 'Keytrack', 'Lowest Key', 'Highest Key', 'Latest Key'],
];

function ModCell({ t }: { t: string }) {
  const on = t === 'S-LFO 1';
  return (
    <div className={`relative flex h-[42px] items-center justify-center border-[3px] pb-px text-[24px] font-bold ${on ? 'border-[#8d94ff] bg-[#2f0c47] text-white' : 'border-[#373737] bg-[#14051e] text-[#9c9c9c]'}`}>
      {(t === 'Random' || t === 'Alternate') && (
        <div className="absolute left-[6px] flex flex-col gap-[4.500px]">
          {[0, 1, 2].map((i) => <div key={i} className="h-[4px] w-[18px] bg-[#3b3b3b]" />)}
        </div>
      )}
      {t}
      {t.includes('LFO') && (
        <svg className="absolute right-px" width="33" height="30" viewBox="0 0 33 30">
          <path d="M11 1.500H22V11.500H31L16.500 28L2 11.500H11Z" fill={on ? '#fff' : '#000'} stroke={on ? '#fff' : '#9c9c9c'} strokeWidth="3" />
        </svg>
      )}
    </div>
  );
}

function ModSection() {
  return (
    <section className="flex h-[220px] bg-linear-to-b from-[#47287a] via-[#390c56] via-[36%] to-[#2a1347] pt-[6px] pl-[9px] shadow-[inset_0_2px_2px_#5b4a83,inset_3px_0_2px_#35205a]">
      <div className="flex h-[210px] w-[60px] flex-col items-center border-[3px] border-[#373737] bg-[#14051e] pt-[41px] text-[24px] leading-[30px] text-[#9c9c9c]">
        <span>L</span><span>i</span><span>s</span><span>t</span>
      </div>
      <div className="ml-[6px] flex w-[2157px] flex-col gap-[6px]">
        <div className="grid grid-cols-8 gap-[3px]">
          {[1, 2, 3, 4, 5, 6, 7, 8].map((n) => (
            <div key={n} className="flex h-[66px] flex-col border-[3px] border-[#373737] bg-[#14051e] px-[3px] text-center text-[24px] leading-[36px] font-bold text-[#9c9c9c]">
              <div className="h-[39px]">Macro {n}</div>
              <div className="h-[18px] border-l-[3px] border-white bg-[#551d7d]" />
            </div>
          ))}
        </div>
        {modRows.map((r) => (
          <div key={r[0]} className="grid grid-cols-10 gap-[3px]">{r.map((t) => <ModCell key={t} t={t} />)}</div>
        ))}
      </div>
    </section>
  );
}

/* ---------- LFO section ---------- */

const W = '#b3b3b3';
const waves: React.ReactNode[] = [
  <path d="M11 22C11 3.500 35 3.500 36.200 21.500C38 38 61 38 61.300 20" stroke="#fff" />,
  <path d="M12 21.700L25.300 8.700L50 33.700L62.700 20.300" />,
  <path d="M12 33V10.700H36V31.700H60V11" />,
  <path d="M13.300 34V9.700L37.300 33.700V9L62.300 33.700" />,
  <path d="M8.700 18L11 5.500L15.700 28L18 18L20 34L24.300 11L27 24L30.300 9L33.300 30L35.700 21.300L38.700 33.500L42.700 11.500L44.700 24L47.300 9L51 30.500L54 21.300L56.700 29L60.700 5.500L63.300 17.300" strokeWidth="2.400" />,
  <path d="M11 22H16.300V8H22.300V18H28.300V33.700H34.300V11.300H40.300V31.300H47V19.700H52.300V14.700H58.300V27H65.700" strokeWidth="2.600" />,
  <path d="M12 33.700L21 8.500L30 20.300H51.300L60.700 33.700" />,
  <path stroke="none" fill={W} d="M9 21H14.800V36H9ZM15.500 21H21V30H15.500ZM21.500 20.300H27.500V22H21.500ZM28 12H33.800V21H28ZM34.300 6H40V21H34.300ZM40.500 12H46.500V21H40.500ZM47 20.300H53V22H47ZM53.300 21H59V30H53.300ZM59.500 21H65.700V36H59.500Z" />,
  <g strokeWidth="2.200"><path d="M12.500 33.500C22 32 21 13 29.500 11M32.500 12.300L42 25M44.800 25.200Q49 15 56.500 13" /><circle cx="10.300" cy="33.700" r="2" strokeWidth="1.500" /><circle cx="31.300" cy="10.300" r="2" strokeWidth="1.500" /><circle cx="43.300" cy="27" r="2" strokeWidth="1.500" /><circle cx="58.300" cy="12.700" r="2" strokeWidth="1.500" /></g>,
];

function LfoDisplay() {
  const pts: string[] = [];
  for (let x = 911.5; x <= 1776; x += 1.5) pts.push(`${x} ${(1563 - 100.5 * Math.sin(((x - 911.5) / 156.8) * 2 * Math.PI)).toFixed(2)}`);
  const cols = Array.from({ length: 61 }, (_, i) => 910.500 + i * 14.260);
  const rows = [1486, 1511, 1536, 1587, 1612, 1637];
  return (
    <div className="mt-[9px] ml-[48px] h-[269px] w-[879px] shrink-0 overflow-hidden rounded-[10px] border-[3px] border-black bg-[#1f1f1f] shadow-[0_0_2px_#444]">
      <svg width="873" height="263" viewBox="909 1432 873 263" fill="none">
        <path d="M909 1433.500H1782" stroke="#3a3a3a" strokeWidth="2" />
        <rect x="911" y="1437" width="865" height="252" fill="#000" />
        {rows.map((y) => cols.map((x) => <rect key={`${x}-${y}`} x={x - 1} y={y - 1.500} width="2.500" height="3" fill="#2b2b2b" />))}
        {[1462.500, 1563, 1663.500].map((y) => <path key={y} d={`M911.500 ${y}H1776`} stroke="#3a3a3a" strokeWidth="3" />)}
        <path d={`M${pts.join('L')}`} stroke="#7431ff" strokeWidth="3" />
        <path d="M912 1664V1676.500M1303.500 1664V1676.500M1695.500 1664V1676.500" stroke="#b3b3b3" strokeWidth="3" />
        <g fontSize="24" fill="#b0b0b0"><text x="914.500" y="1688">0 s</text><text x="1307.500" y="1688">2.5 s</text><text x="1698.500" y="1688">5 s</text></g>
      </svg>
    </div>
  );
}

function LfoSection() {
  return (
    <section className="flex h-[284px]">
      <div className="flex w-[68px] flex-col items-center bg-[#1c1c1c] pt-[11px] pl-px text-[26px] leading-[30px] font-bold text-white">
        <div className="flex h-[33px] w-[33px] flex-col items-center justify-center gap-[3.500px] rounded-[8px] border-[3px] border-black bg-[#7431ff]">
          {[0, 1, 2].map((i) => <div key={i} className="h-[3px] w-[16px] bg-white" />)}
        </div>
        <div className="mt-[8px] pl-[2px]">S</div><div className="pl-[2px]">L</div><div className="pl-[2px]">F</div><div className="mt-[3px] pl-[2px]">O</div><div className="mt-[15px] pl-[2px]">1</div>
      </div>
      <div className={`${bodyLit} ml-[3px] flex flex-1 items-start`}>
        <div className="flex flex-col gap-[9px] pt-[28px] pl-[34px]">
          <HSlider label="Rate" v={0.438} tone="violet" />
          <HSlider label="Phase" v={0} tone="violet" />
          <HSlider label="Deform" v={0.5} ticks="long" tone="violet" />
          <HSlider label="Amplitude" v={1} tone="violet" />
        </div>
        <div className="mt-[29px] ml-[42px] flex w-[153px] flex-col text-center text-[24px] font-black text-[#a9a9a9]">
          <div className={`${box} flex h-[117px] flex-col px-[3px]`}>
            <div className="h-[36px] leading-[39px]">Freerun</div>
            <div className="mx-[3px] h-[3px] bg-[#0b0b0b]" />
            <div className="h-[33px] rounded-[4px] bg-[#7431ff] leading-[37px] text-white">Keytrigger</div>
            <div className="mx-[3px] mt-px h-[3px] bg-[#0b0b0b]" />
            <div className="leading-[38px]">Random</div>
          </div>
          <div className={`${box} mt-[69px] h-[42px] leading-[37px]`}>Unipolar</div>
        </div>
        <div className="mt-[29px] ml-[36px] grid h-[228px] w-[153px] grid-cols-2 gap-[3px] overflow-hidden rounded-[9px] border-[3px] border-black bg-black">
          {waves.map((w, i) => (
            <div key={i} className="bg-[#232323]">
              <svg width="72" height="42" viewBox="0 0 72 42" fill="none" stroke={W} strokeWidth="2.800" strokeLinejoin="round">
                {i === 0 && <rect x="3" y="3" width="66" height="36" rx="4" fill="#7431ff" stroke="none" />}
                {w}
              </svg>
            </div>
          ))}
          <div className="bg-[#232323] pl-px text-center font-['Liberation_Serif',serif] text-[18px] leading-[42px] text-[#b3b3b3] italic">f=ax+b</div>
        </div>
        <LfoDisplay />
        <div className="mt-[8px] ml-[57px] flex flex-col items-center">
          <Title cls="leading-[36px]">LFO EG</Title>
          <div className="mt-[30px] flex">
            {[['D', 0], ['A', 0], ['H', 0], ['D', 0.615], ['S', 1], ['R', 1]].map(([l, v], i) => (
              <Channel key={i} label={l as string} v={v as number} tone="violet" len={150} />
            ))}
          </div>
        </div>
      </div>
    </section>
  );
}

/* ---------- effects column ---------- */

const L = '#8d94ff';

function FxGraph() {
  const xs = [2325, 2394, 2463, 2532];
  const ys = [231, 276, 321, 366];
  const slots: [number, number, boolean][] = [
    ...xs.map((x): [number, number, boolean] => [x, 231, false]),
    ...xs.map((x): [number, number, boolean] => [x, 300, false]),
    ...xs.map((x, i): [number, number, boolean] => [x, 366, i === 1]),
    ...ys.map((y): [number, number, boolean] => [2640, y, false]),
  ];
  const r = (x: number, y: number) => `M${x - 9} ${y - 6.5}L${x} ${y}L${x - 9} ${y + 6.5}Z`;
  const d = (x: number, y: number) => `M${x - 6} ${y - 9}L${x} ${y}L${x + 6} ${y - 9}Z`;
  const u = (x: number, y: number) => `M${x - 6} ${y + 9}L${x} ${y}L${x + 6} ${y + 9}Z`;
  const mid = [2353.5, 2422.5, 2491.5, 2560.5];
  return (
    <svg width="411" height="174" viewBox="2289 228 411 174" fill="none">
      <g stroke={L} strokeWidth="3">
        <path d="M2319 247.500H2325M2382 247.500H2388M2451 247.500H2457M2520 247.500H2526M2319 384H2325M2382 384H2388M2451 384H2457M2520 384H2526" />
        <path d="M2589 247.500H2611.500V298M2353.500 293V280.500H2611.500M2353.500 340V349.500H2611.500M2589 384H2611.500V336" />
        <path d="M2422.500 280.500V293M2491.500 280.500V293M2560.500 280.500V293M2422.500 349.500V340M2491.500 349.500V340M2560.500 349.500V340M2589 316.500H2594" />
        <path d="M2623 316.500H2629.500V247.500H2634M2668.500 264V269M2668.500 309V314M2668.500 354V359" />
        <circle cx="2611.500" cy="316.500" r="10.500" />
        <path d="M2611.500 309V324M2604 316.500H2619" />
        <path d="M2383.500 316.500H2386.500M2390 316.500H2393M2452.500 316.500H2455.500M2459 316.500H2462M2521.500 316.500H2524.500M2528 316.500H2531" />
      </g>
      <path
        fill={L}
        d={xs.slice(1).map((x) => r(x, 247.500) + r(x, 384)).join('') + mid.map((x) => d(x, 300) + u(x, 333)).join('') + d(2611.500, 305) + u(2611.500, 328.500) + r(2602, 316.500) + r(2640, 247.500) + d(2668.500, 276) + d(2668.500, 321) + d(2668.500, 366)}
      />
      {slots.map(([x, y, on]) => (
        <g key={`${x}-${y}`}>
          <rect x={x + 1.500} y={y + 1.500} width={54} height={30} fill="#14051e" stroke={P} strokeWidth={3} />
          <rect x={x + 21} y={y + 15} width={18} height={3} fill={on ? '#fff' : '#a9a9a9'} />
        </g>
      ))}
      {([['A', 231], ['B', 366]] as [string, number][]).map(([t, y]) => (
        <g key={t}>
          <rect x={2293.500} y={y + 1.500} width={24} height={30} fill="#14051e" stroke={P} strokeWidth={3} />
          <text x={2305.500} y={y + 25} textAnchor="middle" fontSize={22} fill="#b0b0b0">{t}</text>
        </g>
      ))}
    </svg>
  );
}

function FxColumn() {
  return (
    <aside className="flex flex-1 flex-col">
      <div className="flex h-[402px] flex-col bg-linear-to-b from-[#262626] to-[#1e1e1e] pt-[57px] pl-[42px] shadow-[inset_2px_0_1px_#3b3b3b,inset_0_3px_1px_#363636]">
        <FxGraph />
        <div className="mt-[38px] flex flex-col gap-[9px] pl-[21px]">
          <HSlider label="Send FX 1 Return" v={1} tone="pink" />
          <HSlider label="Send FX 2 Return" v={1} tone="pink" />
        </div>
      </div>
      <div className="mt-[3px] flex flex-1 flex-col bg-linear-to-b from-[#262626] to-[#1b1b1b] pt-[9px] pl-[53px] shadow-[inset_2px_0_1px_#3b3b3b,inset_0_3px_1px_#3b3b3b]">
        <div className="flex h-[48px] w-[387px] items-center rounded-[8px] border-[3px] border-white bg-linear-to-b from-[#3b1056] to-[#14051e] px-[10px] text-[27px] text-[#b0b0b0]">
          <span className="pt-px">B Insert FX 2</span><span className="mr-[8px] ml-auto pt-px">Off</span><Down w={15} h={10} />
        </div>
        <ArrowBox cls="mt-[6px] ml-[293px]" />
        <div className={`${box} mt-auto mr-[9px] mb-[9px] flex h-[45px] w-[150px] items-center self-end pl-[14px]`}>
          <svg width="23" height="23" viewBox="0 0 23 23">
            <rect width="23" height="23" fill="#c9458f" />
            <path d="M6 5.500L14.500 6.500L14.500 3.500L22.500 6L17 10L15.500 8.300ZM17 10L16 8L7 5.500M0 11.500L8 14.300L7.500 11.300L16.500 15.500L9.500 15.500L10 18.500L0 16L5.500 15Z" fill="#232323" />
          </svg>
          <span className="ml-[10px] text-[30px] leading-[36px] font-black text-[#b0b0b0]">Menu</span>
        </div>
      </div>
    </aside>
  );
}

export default function App() {
  return (
    <div className="relative flex h-[1704px] w-[2709px] flex-col overflow-hidden bg-black font-['Lato',sans-serif]">
      <Defs />
      <Header />
      <main className="mt-[3px] flex flex-1 gap-[3px]">
        <div className="flex w-[2244px] flex-col gap-[3px]">
          <div className="flex h-[1023px] gap-[3px]">
            <OscColumn />
            <div className="flex flex-col gap-[3px]">
              <div className="flex h-[402px] gap-[3px]">
                <BendPanel />
                <FMPanel />
                <FilterConfigPanel />
                <SceneOutputPanel />
              </div>
              <div className="flex h-[618px] gap-[3px]">
                <ScenePanel />
                <FilterArea />
              </div>
            </div>
          </div>
          <ModSection />
          <LfoSection />
        </div>
        <FxColumn />
      </main>
    </div>
  );
}
